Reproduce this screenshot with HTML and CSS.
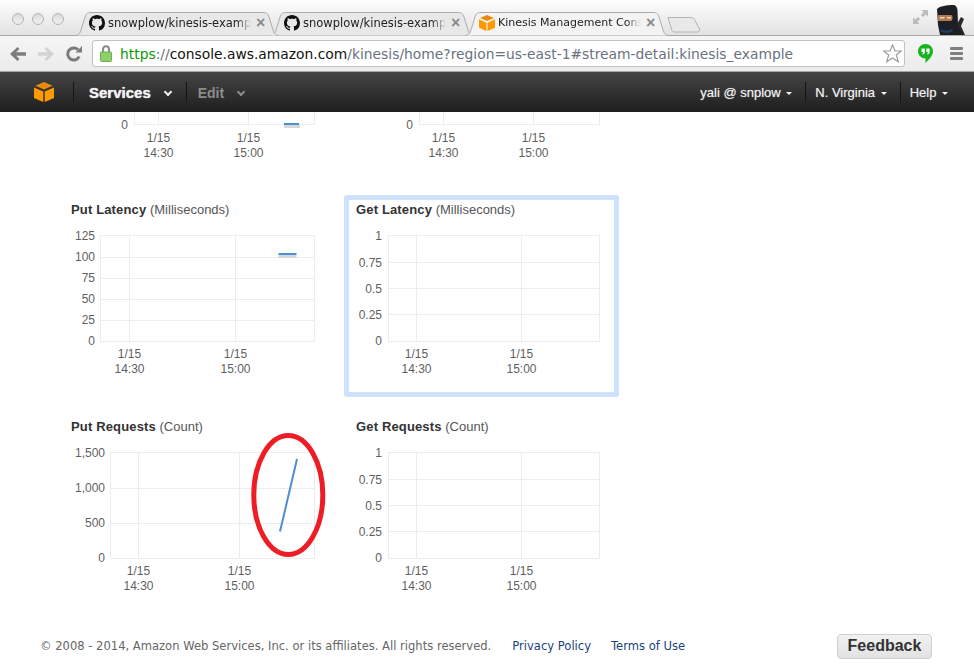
FILE: index.html
```html
<!DOCTYPE html>
<html lang="en">
<head>
    <meta charset="UTF-8">
    <meta name="viewport" content="width=device-width, initial-scale=1.0">
    <title>Kinesis Management Console</title>
    <link rel="stylesheet" href="styles.css">
</head>
<body>
    <svg class="defs" width="0" height="0">
        <symbol id="tabShape" viewBox="0 0 204 24" preserveAspectRatio="none">
            <path d="M0 23.5C4 23.5 5 21 6 18L10 5C11 2 12 .5 16 .5H188C192 .5 193 2 194 5L198 18C199 21 200 23.5 204 23.5"/>
        </symbol>
        <symbol id="octocat" viewBox="0 0 16 16">
            <path d="M8 0C3.58 0 0 3.58 0 8c0 3.54 2.29 6.53 5.47 7.59.4.07.55-.17.55-.38 0-.19-.01-.82-.01-1.49-2.01.37-2.53-.49-2.69-.94-.09-.23-.48-.94-.82-1.13-.28-.15-.68-.52-.01-.53.63-.01 1.08.58 1.23.82.72 1.21 1.87.87 2.33.66.07-.52.28-.87.51-1.07-1.78-.2-3.64-.89-3.64-3.95 0-.87.31-1.59.82-2.15-.08-.2-.36-1.02.08-2.12 0 0 .67-.21 2.2.82.64-.18 1.32-.27 2-.27.68 0 1.36.09 2 .27 1.53-1.04 2.2-.82 2.2-.82.44 1.1.16 1.92.08 2.12.51.56.82 1.27.82 2.15 0 3.07-1.87 3.75-3.65 3.95.29.25.54.73.54 1.48 0 1.07-.01 1.93-.01 2.2 0 .21.15.46.55.38A8.013 8.013 0 0016 8c0-4.42-3.58-8-8-8z"/>
        </symbol>
        <symbol id="cube" viewBox="0 0 20 20">
            <path class="cube-top" d="M10 0L18.6 3.8 10 7.6 1.4 3.8z"/>
            <path class="cube-side" d="M0 5.4L9.3 9.6V20L0 16zM20 5.4L10.7 9.6V20L20 16z"/>
        </symbol>
    </svg>

    <div class="tabstrip">
        <div class="lights"><span></span><span></span><span></span></div>
        <div class="tabs">
            <div class="tab tab-first">
                <svg class="tab-shape"><use href="#tabShape"/></svg>
                <svg class="favicon"><use href="#octocat"/></svg>
                <span class="tab-title">snowplow/kinesis-exampl</span>
                <span class="tab-close">×</span>
            </div>
            <div class="tab">
                <svg class="tab-shape"><use href="#tabShape"/></svg>
                <svg class="favicon"><use href="#octocat"/></svg>
                <span class="tab-title">snowplow/kinesis-exampl</span>
                <span class="tab-close">×</span>
            </div>
            <div class="tab tab-active">
                <svg class="tab-shape"><use href="#tabShape"/></svg>
                <svg class="favicon"><use href="#cube"/></svg>
                <span class="tab-title">Kinesis Management Cons</span>
                <span class="tab-close">×</span>
            </div>
            <svg class="new-tab" width="34" height="17" viewBox="0 0 34 17">
                <path d="M1 1.5H24C26 1.5 27 2.5 28 4.5L32.5 13C33 15 32 16 30 16H8C6 16 5 15 4.5 13L1 1.5z"/>
            </svg>
        </div>
        <div class="strip-right">
            <svg class="fullscreen" width="15" height="14" viewBox="0 0 16 15">
                <path d="M9 0H16V7L13.6 4.7 10.6 7.6 8.4 5.4 11.3 2.4zM0 15V8L2.4 10.3 5.4 7.4 7.6 9.6 4.7 12.6 7 15z"/>
            </svg>
            <svg class="ninja" width="29" height="30" viewBox="0 0 29 30">
                <path class="ninja-sword" d="M21 19L25 12 28 14 25 21 29 30H20z"/>
                <path class="ninja-body" d="M1 4C4 1 11 0 17 0 20 0 21 2 21.500 5L22 20 27 30H4L2 20z"/>
                <path class="ninja-band" d="M2 10H15C17 10 17 15.500 15 16H2z"/>
                <path class="ninja-eyes" d="M4 12H8.500V13.500H4zM11 12H15V13.500H11z"/>
                <path class="ninja-trim" d="M4 24C8 26 12 26 16 24L17 26C13 28.500 8 28.500 5 26.500z"/>
            </svg>
        </div>
    </div>

    <div class="toolbar">
        <svg class="nav-arrow" width="16" height="14" viewBox="0 0 16 14">
            <path d="M7.500 0L9.500 2 6.200 5.300H16V8.700H6.200L9.500 12 7.500 14 0 7z"/>
        </svg>
        <svg class="nav-arrow nav-arrow-off" width="16" height="14" viewBox="0 0 16 14">
            <path d="M8.500 0L6.500 2 9.800 5.300H0V8.700H9.800L6.500 12 8.500 14 16 7z"/>
        </svg>
        <svg class="reload" width="16" height="16" viewBox="0 0 16 16">
            <path d="M13.200 10.500A6 6 0 1 1 12 3.800" />
            <path class="reload-head" d="M9.500 6.500H16V0z"/>
        </svg>
        <div class="omnibox">
            <svg class="lock" width="12" height="17" viewBox="0 0 12 17">
                <path class="lock-shackle" d="M3 7V4.500C3 2.500 4 1.200 6 1.200S9 2.500 9 4.500V7"/>
                <rect class="lock-body" x=".5" y="7" width="11" height="9.500" rx="1"/>
            </svg>
            <div class="url"><span class="url-https">https</span><span class="url-path">://</span><span class="url-host">console.aws.amazon.com</span><span class="url-path">/kinesis/home?region=us-east-1#stream-detail:kinesis_example</span></div>
            <svg class="star" width="19" height="19" viewBox="0 0 19 19">
                <path d="M9.500 1L12 7H18.300L13.300 11 15.200 17.700 9.500 13.900 3.800 17.700 5.700 11 .7 7H7z"/>
            </svg>
        </div>
        <svg class="hangouts" width="15" height="19" viewBox="0 0 15 19">
            <path class="hangouts-bubble" d="M7.500 0C11.600 0 15 3.200 15 7.200 15 11.500 11 15.500 7.500 19V14.400C3.400 14.400 0 11.200 0 7.200S3.400 0 7.500 0z"/>
            <path class="hangouts-quotes" d="M3.500 4.500H6.800V8C6.800 9.600 5.800 10.400 4.600 10.600V9C5.100 8.900 5.200 8.500 5.200 8H3.500zM8.300 4.500H11.600V8C11.600 9.600 10.600 10.400 9.400 10.600V9C9.900 8.900 10 8.500 10 8H8.300z"/>
        </svg>
        <div class="menu-bars"><span></span><span></span><span></span></div>
    </div>

    <nav class="navbar">
        <svg class="aws-logo"><use href="#cube"/></svg>
        <div class="nav-item nav-services">Services<i class="chevron"></i></div>
        <div class="nav-item nav-edit">Edit<i class="chevron"></i></div>
        <div class="nav-right">
            <div class="nav-user">yali @ snplow <i class="caret"></i></div>
            <div class="nav-user">N. Virginia <i class="caret"></i></div>
            <div class="nav-user">Help <i class="caret"></i></div>
        </div>
    </nav>

    <main class="charts">
        <!-- first row is scrolled off, only the bottom of the plots shows -->
        <section class="chart chart-cut">
            <svg class="plot plot-cut">
                <g class="grid-lines">
                    <path d="M63.500 0V12.500H243.500V0M87.500 0V12.500M177.500 0V12.500"/>
                </g>
                <text class="tick-y" x="57" y="16.500">0</text>
                <rect class="series-shadow" x="213" y="13" width="16" height="3"/>
                <line class="series" x1="213" y1="12" x2="228" y2="12"/>
                <text class="tick-x" x="87.500" y="30">1/15</text>
                <text class="tick-x" x="87.500" y="45">14:30</text>
                <text class="tick-x" x="177.500" y="30">1/15</text>
                <text class="tick-x" x="177.500" y="45">15:00</text>
            </svg>
        </section>
        <section class="chart chart-cut">
            <svg class="plot plot-cut">
                <g class="grid-lines">
                    <path d="M63.500 0V12.500H243.500V0M87.500 0V12.500M177.500 0V12.500"/>
                </g>
                <text class="tick-y" x="57" y="16.500">0</text>
                <text class="tick-x" x="87.500" y="30">1/15</text>
                <text class="tick-x" x="87.500" y="45">14:30</text>
                <text class="tick-x" x="177.500" y="30">1/15</text>
                <text class="tick-x" x="177.500" y="45">15:00</text>
            </svg>
        </section>

        <section class="chart">
            <h3 class="chart-title"><b>Put Latency</b> (Milliseconds)</h3>
            <svg class="plot">
                <g class="grid-lines">
                    <rect x="29.500" y="17.500" width="214" height="106"/>
                    <path d="M29.500 39.500H243.500M29.500 60.500H243.500M29.500 81.500H243.500M29.500 102.500H243.500M58.500 17.500V123.500M164.500 17.500V123.500"/>
                </g>
                <text class="tick-y" x="24" y="22">125</text>
                <text class="tick-y" x="24" y="43">100</text>
                <text class="tick-y" x="24" y="64">75</text>
                <text class="tick-y" x="24" y="85">50</text>
                <text class="tick-y" x="24" y="106">25</text>
                <text class="tick-y" x="24" y="127">0</text>
                <rect class="series-shadow" x="207.500" y="37" width="18" height="3"/>
                <line class="series" x1="207.500" y1="36" x2="225.500" y2="36"/>
                <text class="tick-x" x="58.500" y="140">1/15</text>
                <text class="tick-x" x="58.500" y="155">14:30</text>
                <text class="tick-x" x="164.500" y="140">1/15</text>
                <text class="tick-x" x="164.500" y="155">15:00</text>
            </svg>
        </section>
        <section class="chart chart-selected">
            <h3 class="chart-title"><b>Get Latency</b> (Milliseconds)</h3>
            <svg class="plot">
                <g class="grid-lines">
                    <rect x="32.500" y="17.500" width="211" height="106"/>
                    <path d="M32.500 44.500H243.500M32.500 70.500H243.500M32.500 96.500H243.500M60.500 17.500V123.500M165.500 17.500V123.500"/>
                </g>
                <text class="tick-y" x="26" y="22">1</text>
                <text class="tick-y" x="26" y="49">0.75</text>
                <text class="tick-y" x="26" y="75">0.5</text>
                <text class="tick-y" x="26" y="101">0.25</text>
                <text class="tick-y" x="26" y="127">0</text>
                <text class="tick-x" x="60.500" y="140">1/15</text>
                <text class="tick-x" x="60.500" y="155">14:30</text>
                <text class="tick-x" x="165.500" y="140">1/15</text>
                <text class="tick-x" x="165.500" y="155">15:00</text>
            </svg>
        </section>

        <section class="chart">
            <h3 class="chart-title"><b>Put Requests</b> (Count)</h3>
            <svg class="plot">
                <g class="grid-lines">
                    <rect x="39.500" y="17.500" width="204" height="106"/>
                    <path d="M39.500 53.500H243.500M39.500 88.500H243.500M67.500 17.500V123.500M168.500 17.500V123.500"/>
                </g>
                <text class="tick-y" x="34" y="22">1,500</text>
                <text class="tick-y" x="34" y="57">1,000</text>
                <text class="tick-y" x="34" y="92">500</text>
                <text class="tick-y" x="34" y="127">0</text>
                <line class="series" x1="209" y1="96.500" x2="226" y2="24"/>
                <text class="tick-x" x="67.500" y="140">1/15</text>
                <text class="tick-x" x="67.500" y="155">14:30</text>
                <text class="tick-x" x="168.500" y="140">1/15</text>
                <text class="tick-x" x="168.500" y="155">15:00</text>
                <ellipse class="marker" cx="217.300" cy="60" rx="34.500" ry="59.500"/>
            </svg>
        </section>
        <section class="chart">
            <h3 class="chart-title"><b>Get Requests</b> (Count)</h3>
            <svg class="plot">
                <g class="grid-lines">
                    <rect x="32.500" y="17.500" width="211" height="106"/>
                    <path d="M32.500 44.500H243.500M32.500 70.500H243.500M32.500 96.500H243.500M60.500 17.500V123.500M165.500 17.500V123.500"/>
                </g>
                <text class="tick-y" x="26" y="22">1</text>
                <text class="tick-y" x="26" y="49">0.75</text>
                <text class="tick-y" x="26" y="75">0.5</text>
                <text class="tick-y" x="26" y="101">0.25</text>
                <text class="tick-y" x="26" y="127">0</text>
                <text class="tick-x" x="60.500" y="140">1/15</text>
                <text class="tick-x" x="60.500" y="155">14:30</text>
                <text class="tick-x" x="165.500" y="140">1/15</text>
                <text class="tick-x" x="165.500" y="155">15:00</text>
            </svg>
        </section>
    </main>

    <footer class="footer">
        <span class="copyright">© 2008 - 2014, Amazon Web Services, Inc. or its affiliates. All rights reserved.</span>
        <a class="footer-link">Privacy Policy</a>
        <a class="footer-link">Terms of Use</a>
        <button class="feedback">Feedback</button>
    </footer>
</body>
</html>
```

FILE: styles.css
```css
body {
    margin: 0;
    width: 974px;
    height: 670px;
    overflow: hidden;
    background: white;
    font-family: "Liberation Sans", Arial, sans-serif;
}

.defs {
    position: absolute;
}

/* browser window */
.tabstrip {
    height: 35px;
    display: flex;
    background: linear-gradient(#fdfdfd, #e2e2e2);
    border-bottom: 1px solid #a8a8a8;
}

.lights {
    display: flex;
    gap: 8px;
    padding: 13px 0 0 12px;
    width: 75px;
    box-sizing: border-box;
}

.lights span {
    width: 12px;
    height: 12px;
    box-sizing: border-box;
    border: 1px solid #b4b4b4;
    border-radius: 50%;
    background: linear-gradient(#dcdcdc, #efefef);
}

.tabs {
    display: flex;
    padding-top: 12px;
    height: 24px;
    flex: 1;
}

.tab {
    position: relative;
    width: 204px;
    height: 24px;
    margin-right: -9px;
    display: flex;
    align-items: center;
    padding: 0 0 3px 14px;
    box-sizing: border-box;
    font-family: "DejaVu Sans", sans-serif;
    font-size: 11.500px;
    color: #222;
}

.tab-first {
    z-index: 2;
}

.tab-active {
    z-index: 3;
    font-size: 11px;
}

.tab-shape {
    position: absolute;
    left: 0;
    top: 0;
    width: 204px;
    height: 24px;
    fill: #e8e8e8;
    stroke: #adadad;
}

.tab-active .tab-shape {
    fill: #f3f3f3;
}

.favicon {
    position: relative;
    width: 16px;
    height: 16px;
    margin-right: 3px;
    flex: none;
    fill: #111;
}

.tab-title {
    position: relative;
    width: 146px;
    white-space: nowrap;
    -webkit-mask-image: linear-gradient(to right, black 88%, transparent 98%);
    mask-image: linear-gradient(to right, black 88%, transparent 98%);
}

.tab-close {
    position: relative;
    margin-left: 2px;
    font-family: "Liberation Sans", sans-serif;
    font-size: 16px;
    font-weight: bold;
    line-height: 16px;
    color: #8a8a8a;
}

.new-tab {
    position: relative;
    margin: 4px 0 0 7px;
    fill: #e9e9e9;
    stroke: #b4b4b4;
}

.strip-right {
    display: flex;
    padding: 5px 9px 0 0;
    gap: 8px;
    height: 30px;
}

.fullscreen {
    fill: #bcbcbc;
    margin-top: 5px;
}

.ninja-sword {
    fill: #2b2b2b;
}

.ninja-body {
    fill: #1d1f24;
}

.ninja-band {
    fill: #b5794f;
}

.ninja-eyes {
    fill: #f2dcc5;
}

.ninja-trim {
    fill: #1f3d66;
}

.toolbar {
    height: 35px;
    display: flex;
    align-items: center;
    background: linear-gradient(#f6f6f6, #ebebeb);
    border-bottom: 1px solid #a6a6a6;
    padding-left: 10px;
}

.nav-arrow {
    fill: #7c7c7c;
    margin-right: 12px;
}

.nav-arrow-off {
    fill: #d3d3d3;
}

.reload {
    fill: none;
    stroke: #7c7c7c;
    stroke-width: 3;
    margin-right: 10px;
}

.reload-head {
    fill: #7c7c7c;
    stroke: none;
}

.omnibox {
    width: 813px;
    height: 27px;
    box-sizing: border-box;
    background: white;
    border: 1px solid #c1c1c1;
    border-radius: 3px;
    display: flex;
    align-items: center;
    padding: 0 2px 0 7px;
}

.lock {
    flex: none;
    margin-right: 8px;
}

.lock-shackle {
    fill: none;
    stroke: #8a8a8a;
    stroke-width: 2;
}

.lock-body {
    fill: #8fcf6a;
    stroke: #6fae4e;
}

.url {
    flex: 1;
    font-family: "DejaVu Sans", sans-serif;
    font-size: 13.850px;
    white-space: nowrap;
}

.url-https {
    color: #0d9a05;
}

.url-path {
    color: #68727e;
}

.url-host {
    color: #111;
}

.star {
    fill: white;
    stroke: #9b9b9b;
    stroke-width: 1.200;
    flex: none;
}

.hangouts {
    margin-left: 13px;
    flex: none;
}

.hangouts-bubble {
    fill: #14b51f;
}

.hangouts-quotes {
    fill: white;
}

.menu-bars {
    margin-left: 17px;
    width: 13px;
    display: flex;
    flex-direction: column;
    gap: 2px;
}

.menu-bars span {
    height: 3px;
    background: #7f7f7f;
    border-radius: 1px;
}

/* console header */
.navbar {
    height: 40px;
    display: flex;
    align-items: center;
    background: linear-gradient(#454545, #1e1e1e);
    color: #f2f2f2;
    padding-left: 34px;
}

.aws-logo {
    width: 20px;
    height: 20px;
    margin-right: 19px;
    flex: none;
}

.cube-top {
    fill: #e8890c;
}

.cube-side {
    fill: #ff9900;
}

.nav-item {
    height: 20px;
    line-height: 22px;
    font-weight: bold;
    font-size: 15px;
    border-left: 1px solid #151515;
}

.nav-services {
    padding: 0 15px 0 15px;
    text-shadow: 0 0 1px #fff;
}

.nav-edit {
    padding-left: 11px;
    font-size: 14px;
    color: #8c8c8c;
}

.chevron {
    display: inline-block;
    width: 4px;
    height: 4px;
    margin-left: 14px;
    vertical-align: 3px;
    border-right: 2px solid currentColor;
    border-bottom: 2px solid currentColor;
    transform: rotate(45deg);
}

.caret {
    display: inline-block;
    width: 0;
    height: 0;
    margin-left: 2px;
    vertical-align: 2px;
    border-left: 3.500px solid transparent;
    border-right: 3.500px solid transparent;
    border-top: 3.500px solid currentColor;
}

.nav-right {
    margin-left: auto;
    display: flex;
    padding-right: 13px;
}

.nav-user {
    height: 20px;
    line-height: 22px;
    font-size: 13px;
    padding: 0 13px 0 9px;
    border-left: 1px solid #151515;
    text-shadow: 0 0 1px #999;
}

.nav-user:first-child {
    border-left: 0;
}

/* charts */
.charts {
    display: grid;
    grid-template-columns: 275px 275px;
    column-gap: 10px;
    row-gap: 15px;
    padding-left: 59px;
}

.chart {
    border: 5px solid transparent;
    border-radius: 3px;
    padding: 0 7px;
    height: 202px;
    box-sizing: border-box;
}

.chart-cut {
    height: 68px;
    border-top: 0;
}

.chart-selected {
    border-color: #cfe2fd;
}

.chart-title {
    margin: 0;
    height: 18px;
    line-height: 20px;
    font-size: 13px;
    font-weight: normal;
    color: #555;
    white-space: nowrap;
}

.chart-title b {
    color: #333;
    letter-spacing: .15px;
}

.plot {
    display: block;
    width: 251px;
    height: 174px;
    overflow: visible;
}

.plot-cut {
    height: 63px;
}

.grid-lines {
    fill: none;
    stroke: #ececec;
}

.tick-y,
.tick-x {
    font-size: 12px;
    fill: #5f5f5f;
}

.tick-y {
    text-anchor: end;
}

.tick-x {
    text-anchor: middle;
}

.series {
    stroke: #4a90d2;
    stroke-width: 2;
}

.series-shadow {
    fill: #d8d8d8;
}

.marker {
    fill: none;
    stroke: #ee1c25;
    stroke-width: 5;
}

/* footer */
.footer {
    display: flex;
    align-items: center;
    height: 26px;
    margin-top: 19px;
    padding: 0 42px 0 40px;
    font-family: "DejaVu Sans", sans-serif;
    font-size: 11.550px;
}

.copyright {
    color: #666;
    margin-right: 21px;
}

.footer-link {
    color: #1a3f80;
    margin-right: 20px;
}

.feedback {
    margin-left: auto;
    width: 95px;
    height: 25px;
    padding: 0;
    background: linear-gradient(#f2f2f2, #e2e2e2);
    border: 1px solid #cfcfcf;
    border-radius: 4px;
    font-family: "Liberation Sans", sans-serif;
    font-size: 16px;
    font-weight: bold;
    color: #333;
}
```
